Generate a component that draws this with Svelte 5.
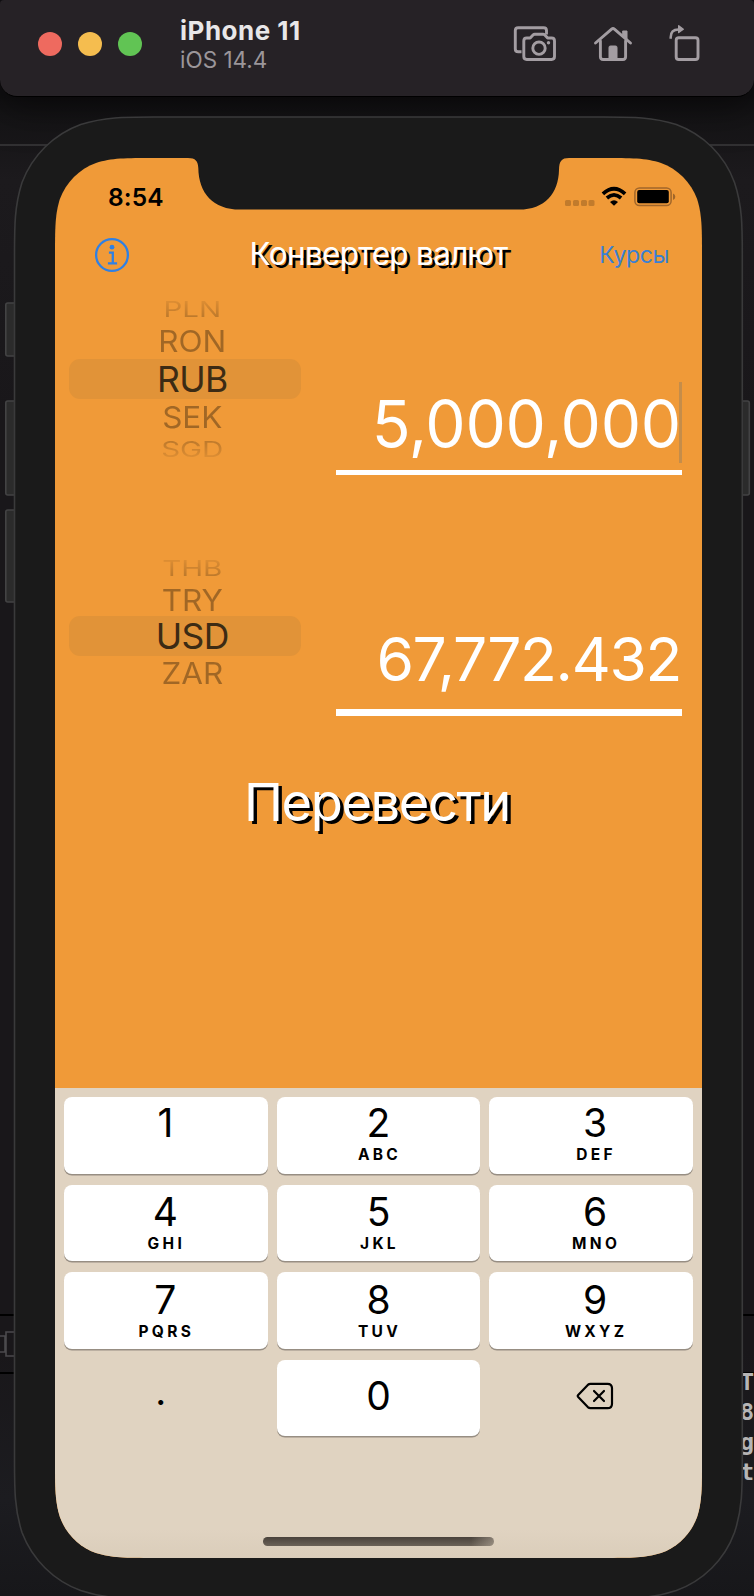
<script>
  const fromWheel = [
    { code: 'PLN', kind: 'far top' },
    { code: 'RON', kind: 'near' },
    { code: 'RUB', kind: 'selected' },
    { code: 'SEK', kind: 'near' },
    { code: 'SGD', kind: 'far bottom' }
  ];
  const toWheel = [
    { code: 'THB', kind: 'far top' },
    { code: 'TRY', kind: 'near' },
    { code: 'USD', kind: 'selected' },
    { code: 'ZAR', kind: 'near' }
  ];
  const keys = [
    ['1', ''], ['2', 'ABC'], ['3', 'DEF'],
    ['4', 'GHI'], ['5', 'JKL'], ['6', 'MNO'],
    ['7', 'PQRS'], ['8', 'TUV'], ['9', 'WXYZ']
  ];
</script>

<div class="desktop">
  <div class="rule top"></div>
  <div class="rule low"></div>
  <div class="rule lower"></div>
  <svg class="gutter" width="16" height="28" viewBox="0 0 16 28" fill="none" stroke="#4b4a4d" stroke-width="1.6">
    <path d="M0 6H5V22H0M16 2H6V26H16" />
  </svg>
  <div class="console"><span>T</span><span>8</span><span>g</span><span>t</span></div>

  <header class="titlebar">
    <div class="lights"><i class="red"></i><i class="yellow"></i><i class="green"></i></div>
    <div class="names">
      <div class="device">iPhone 11</div>
      <div class="os">iOS 14.4</div>
    </div>
    <svg class="tools" width="190" height="40" viewBox="510 24 190 40" fill="none" stroke="#a39da2" stroke-width="2.9" stroke-linejoin="round" stroke-linecap="round">
      <path d="M521.5 51.8H518.2Q515.3 51.8 515.3 48.9V30.6Q515.3 27.7 518.2 27.7H543.6Q546.5 27.7 546.5 30.6V34.5" stroke-linecap="butt" />
      <path d="M526.7 38H530.2L533 35Q533.7 34.3 534.8 34.3H543Q544.1 34.3 544.8 35L547.6 38H551.6Q554.5 38 554.5 40.9V56.6Q554.5 59.5 551.6 59.5H526.7Q523.8 59.5 523.8 56.6V40.9Q523.8 38 526.7 38Z" />
      <circle cx="539" cy="48.2" r="6.2" />
      <circle cx="548.5" cy="42.7" r="1.7" fill="#a39da2" stroke="none" />
      <path d="M595.5 43L611.6 29.2Q613 28 614.4 29.2L630.5 43" />
      <path d="M600.4 41V56.8Q600.4 59.5 603.1 59.5H622.9Q625.6 59.5 625.6 56.8V41" />
      <path d="M623 31H627V39L623 35.5Z" fill="#a39da2" stroke-width="1" />
      <path d="M609 59V47.4Q609 46 610.4 46H615.6Q617 46 617 47.4V59Z" fill="#a39da2" stroke-width="1" />
      <rect x="676.2" y="37.7" width="21.8" height="21.8" rx="2.6" />
      <path d="M670.7 38.8V37.2Q670.7 29.5 678.5 29.5H680" stroke-width="2.500" stroke-linecap="butt" />
      <path d="M678.7 25.800L683.300 29.200L678.700 32.500Z" fill="#a39da2" stroke-width="1.400" />
    </svg>
  </header>

  <div class="phone">
    <svg class="shell" width="754" height="1500" viewBox="0 96 754 1500">
      <g fill="#2b2b2b" stroke="#434344" stroke-width="1.6">
        <rect x="5.8" y="303" width="16" height="53" rx="2" />
        <rect x="5.8" y="401" width="16" height="94" rx="2" />
        <rect x="5.8" y="510" width="16" height="92" rx="2" />
        <rect x="735" y="401" width="14.3" height="94" rx="2" />
      </g>
      <path d="M14.5 255C14.5 226 14.5 206 22 182.5C32.300 155.500 53.700 134.300 80.700 124.500C104.500 117 124 117 153.500 117H603.500C633 117 652.500 117 676.300 124.500C703.300 134.300 724.700 155.500 734.500 182.500C742.300 206 742.300 226 742.300 255V1460C742.300 1489 742.300 1509 734.500 1532.500C724.700 1559.500 703.300 1580.700 676.300 1590.500C652.500 1598.500 633 1598.500 603.500 1598.500H153.500C124 1598.500 104.500 1598.500 80.700 1590.500C53.700 1580.700 32.300 1559.500 22 1532.500C14.500 1509 14.500 1489 14.500 1460Z" fill="#1a1a1a" stroke="#3a3a3b" stroke-width="1.6" />
    </svg>

    <main class="screen">
      <svg class="notch" width="390" height="53" viewBox="185 158 390 53">
        <path d="M185 157H188V158C195.500 158 198 161 198.300 168C198.600 193 213 209.600 240 209.600H519C545 209.600 558.500 193 559 170C559.200 161 561.500 158 569 158V157Z" fill="#1a1a1a" />
      </svg>

      <div class="status">
        <span class="clock">8:54</span>
        <svg width="112" height="24" viewBox="564 185 112 24">
          <g fill="#c17b2c">
            <rect x="565" y="200" width="6" height="6" rx="1.5" /><rect x="573" y="200" width="6" height="6" rx="1.500" />
            <rect x="581" y="200" width="6" height="6" rx="1.500" /><rect x="588.500" y="200" width="6" height="6" rx="1.500" />
          </g>
          <g fill="none" stroke="#000" stroke-width="3.700">
            <path d="M602.900 193.800Q614 183.700 625.100 193.800" />
            <path d="M606.900 198Q614 191.800 621.100 198" />
          </g>
          <path d="M610 201.900Q614 198.700 618 201.900L614 205.700Z" />
          <rect x="634.900" y="187.900" width="36.200" height="17.700" rx="4.500" fill="none" stroke="#a0662a" stroke-width="1.500" />
          <rect x="637.200" y="190.100" width="31.600" height="13.200" rx="2" />
          <path d="M673 193.500Q675.300 194.500 675.300 196.700Q675.300 199 673 200Z" fill="#a0662a" />
        </svg>
      </div>

      <nav>
        <svg width="36" height="36" viewBox="0 0 36 36" fill="none" stroke="#2f80e4">
          <circle cx="18" cy="18" r="15.900" stroke-width="2.300" />
          <path d="M14.900 15.700H18.800V26.200M13.900 26.400H23.100" stroke-width="2.300" />
          <circle cx="18" cy="10.200" r="2.400" fill="#2f80e4" stroke="none" />
        </svg>
        <h1>Конвертер валют</h1>
        <a>Курсы</a>
      </nav>

      <section class="row first">
        <div class="wheel">
          {#each fromWheel as item}
            <div class={item.kind}><span>{item.code}</span></div>
          {/each}
        </div>
        <div class="amount">
          <div class="value large"><span>5,000,000</span><i class="caret"></i></div>
          <div class="line"></div>
        </div>
      </section>

      <section class="row second">
        <div class="wheel">
          {#each toWheel as item}
            <div class={item.kind}><span>{item.code}</span></div>
          {/each}
        </div>
        <div class="amount">
          <div class="value small"><span>67,772.432</span></div>
          <div class="line"></div>
        </div>
      </section>

      <div class="convert">Перевести</div>

      <section class="keyboard">
        <div class="keys">
          {#each keys as [digit, letters], i}
            <div class="key" class:raised={i < 3} class:left={i % 3 === 0} class:right={i % 3 === 2}><b>{digit}</b><small>{letters}</small></div>
          {/each}
          <div class="plain dot">.</div>
          <div class="key zero"><b>0</b></div>
          <div class="plain">
            <svg width="38" height="28" viewBox="0 0 38 28" fill="none" stroke="#000" stroke-width="2.200" stroke-linejoin="round" stroke-linecap="round">
              <path d="M14.500 1.800H31.500Q36 1.800 36 6.300V21.700Q36 26.200 31.500 26.200H14.500Q13 26.200 11.800 25.100L2.200 15Q1.300 14 2.200 13L11.800 2.900Q13 1.800 14.500 1.800Z" />
              <path d="M18 9L28 19M28 9L18 19" />
            </svg>
          </div>
        </div>
        <div class="home"></div>
      </section>
    </main>
  </div>
</div>

<style>
  :global(body) { background: #1b191c; }
  .desktop {
    position: relative; width: 754px; height: 1596px; overflow: hidden;
    font-family: Inter, "Liberation Sans", sans-serif;
    background: linear-gradient(#111012 96px, #151416 116px, #1c1a1d 180px, #19171a 420px, #19171a 1350px, #1c1c20 1500px, #17171a);
  }
  .rule { position: absolute; left: 0; right: 0; height: 2px; background: #000; }
  .rule.top { top: 144px; background: #323133; }
  .rule.low { top: 1314px; }
  .rule.lower { top: 1372px; }
  .gutter { position: absolute; left: 0; top: 1330px; }
  .console {
    position: absolute; left: 740px; top: 1367px; display: flex; flex-direction: column;
    font: 700 23.500px/30px "DejaVu Sans Mono", monospace; color: #b5b5b6;
  }

  .titlebar {
    position: relative; box-sizing: border-box; height: 97px; padding: 0 54px 0 38px;
    display: flex; align-items: center; background: #262226;
    border-bottom: 1px solid #000; border-radius: 4px 4px 17px 17px;
    box-shadow: 0 8px 40px rgba(0, 0, 0, .55);
  }
  .lights { display: flex; gap: 16px; margin-bottom: 8px; }
  .lights i { width: 24px; height: 24px; border-radius: 50%; }
  .red { background: #ee6a5f; }
  .yellow { background: #f5bd4f; }
  .green { background: #61c454; }
  .names { margin: 0 0 6px 38px; white-space: nowrap; }
  .device { font-size: 26px; line-height: 30px; font-weight: 700; color: #e8e7e8; letter-spacing: .500px; }
  .os { font-size: 22.500px; line-height: 28px; color: #9b969a; }
  .tools { margin: 0 0 9px auto; }

  .phone { position: relative; height: 1499px; padding: 61px 52px 0 55px; box-sizing: border-box; }
  .shell { position: absolute; left: 0; top: -1px; }
  .screen {
    position: relative; width: 647px; height: 1400px; display: flex; flex-direction: column; background: #f09a38;
    clip-path: path("M0 99.200C0 70.700 0 56.400 4.900 41C11 24.200 24.200 11 41 4.900C56.400 0 70.700 0 99.200 0H547.800C576.300 0 590.600 0 606 4.900C622.800 11 636 24.200 642.100 41C647 56.400 647 70.700 647 99.200V1300.800C647 1329.300 647 1343.600 642.100 1359C636 1375.800 622.800 1389 606 1395.100C590.600 1400 576.300 1400 547.800 1400H99.200C70.700 1400 56.400 1400 41 1395.100C24.200 1389 11 1375.800 4.900 1359C0 1343.600 0 1329.300 0 1300.800Z");
  }
  .notch { position: absolute; left: 130px; top: 0; }
  .status { height: 77px; padding: 0 26px 0 53px; display: flex; align-items: center; justify-content: space-between; }
  .clock { font-size: 24.500px; font-weight: 600; letter-spacing: .1px; }
  nav {
    height: 40px; padding: 0 33px 0 39px; display: grid; grid-template: 40px / 80px 1fr 80px;
    align-items: center; color: #2f80e4;
  }
  h1 {
    margin: 0 6px 2px 0; font-size: 31.500px; line-height: 38px; font-weight: 400; letter-spacing: -.7px;
    color: #fff; text-shadow: 3px 3px 0 #000; white-space: nowrap; text-align: center;
  }
  nav a { font-size: 23px; line-height: 30px; color: #3a80d2; text-align: right; letter-spacing: -.4px; }

  .row { display: grid; grid-template-columns: 232px 346px; column-gap: 34.700px; padding-left: 14.300px; }
  .first { height: 278px; box-sizing: border-box; padding-top: 19px; }
  .second { height: 200px; }
  .wheel > div {
    box-sizing: border-box; padding-left: 14px; display: flex; align-items: center; justify-content: center;
    color: rgba(0, 0, 0, .33); font-size: 31.500px; height: 34px;
  }
  .wheel > .far { height: 31px; color: rgba(0, 0, 0, .24); font-size: 29.500px; }
  .wheel > .far span { transform: scaleY(.74); }
  .wheel > .top { padding-bottom: 1px; -webkit-mask: linear-gradient(rgba(0,0,0,.3) 20%, #000 85%); mask: linear-gradient(rgba(0,0,0,.3) 20%, #000 85%); }
  .wheel > .bottom { -webkit-mask: linear-gradient(#000 15%, rgba(0,0,0,.3) 80%); mask: linear-gradient(#000 15%, rgba(0,0,0,.3) 80%); }
  .wheel > .near { padding-bottom: 1px; }
  .wheel > .near span { transform: scaleY(.93); }
  .wheel > .selected + .near { padding: 3px 0 0 14px; }
  .wheel > .selected { height: 40px; border-radius: 11px; background: #e19338; color: #3c2b14; font-size: 35.500px; letter-spacing: -.6px; padding-top: 1px; }
  .second .near { height: 32px; }
  .second .near:nth-child(2) { padding-bottom: 0; }
  .second .selected + .near { height: 34px; padding: 1px 0 0 14px; }

  .amount { color: #fff; }
  .value { position: relative; display: flex; align-items: center; justify-content: flex-end; white-space: nowrap; }
  .line { background: #fff; }
  .first .amount { padding-top: 88px; }
  .large { height: 82px; font-size: 64px; letter-spacing: -.25px; padding-right: 1px; box-sizing: border-box; }
  .first .line { height: 5px; margin-top: 6px; }
  .caret { position: absolute; right: 0; top: 0; width: 3px; height: 81px; background: #c58d4a; }
  .second .amount { padding-top: 65px; }
  .small { height: 81px; font-size: 60.500px; letter-spacing: -1.350px; }
  .small span { margin-right: 1px; }
  .second .line { height: 7px; margin-top: 10px; }
  .convert {
    height: 99px; line-height: 99px; text-align: center; font-size: 52.500px; letter-spacing: -1.450px; color: #fff;
    text-shadow: 3.500px 3px 0 #000; padding-right: 3px;
  }

  .keyboard {
    margin-top: auto; height: 470px; box-sizing: border-box; padding: 9px 9px 0; position: relative;
    background: linear-gradient(#e0d3c1 94%, #dacdba);
  }
  .keys { display: grid; grid-template-columns: repeat(3, 1fr); grid-auto-rows: 76.500px; gap: 11px 9px; }
  .key {
    display: flex; flex-direction: column; align-items: center; box-sizing: border-box; padding-top: 7.500px;
    background: #fff; border-radius: 8px; box-shadow: 0 1.500px 0 #978e83; color: #000;
  }
  .raised { padding-top: 6.400px; }
  b { font-size: 39px; line-height: 40px; font-weight: 400; }
  small { font-size: 15.500px; line-height: 23px; font-weight: 700; letter-spacing: 3.300px; padding-left: 2px; }
  .left { padding-right: 1px; }
  .right { padding-left: 8px; }
  .zero { padding-top: 16.500px; }
  .plain { display: flex; align-items: center; justify-content: center; padding: 0 0 3px 7px; }
  .dot { font-size: 38px; line-height: 40px; padding: 0 10px 14px 0; }
  .home {
    width: 231px; height: 9px; margin: 101px auto 0; border-radius: 5px;
    background: linear-gradient(90deg, transparent 90%, rgba(224,211,193,.4)), linear-gradient(#49423b, #6a6157);
  }
</style>
